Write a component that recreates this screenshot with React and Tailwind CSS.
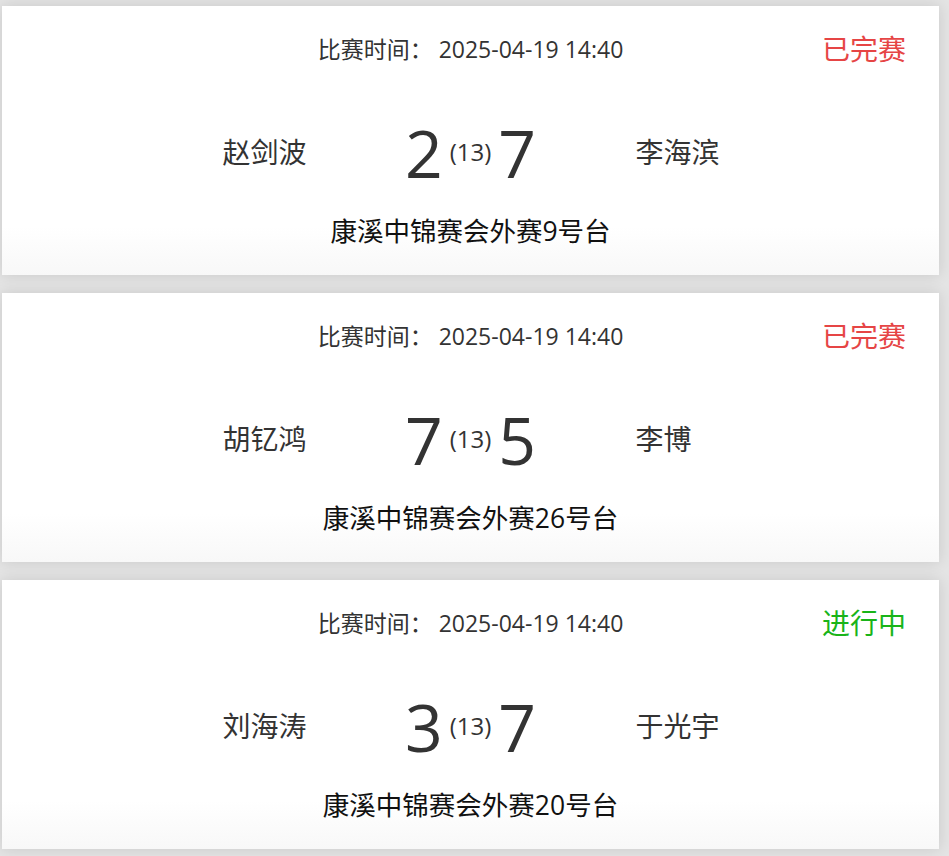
import React from "react";

const matches = [
  { left: "赵剑波", right: "李海滨", a: 2, b: 7, frames: 13, venue: "康溪中锦赛会外赛9号台", status: "已完赛", done: true },
  { left: "胡钇鸿", right: "李博", a: 7, b: 5, frames: 13, venue: "康溪中锦赛会外赛26号台", status: "已完赛", done: true },
  { left: "刘海涛", right: "于光宇", a: 3, b: 7, frames: 13, venue: "康溪中锦赛会外赛20号台", status: "进行中", done: false },
];

function MatchCard({ m }) {
  return (
    <div className="h-[269px] bg-[linear-gradient(to_bottom,#ffffff_82%,#f8f8f8)] shadow-[0_0_14px_rgba(0,0,0,0.12)] flex flex-col">
      {/* time + status */}
      <div className="grid grid-cols-[1fr_auto_1fr] items-center h-[36px] mt-[25px]">
        <div />
        <div className="text-[23px] text-[#333] leading-none">
          比赛时间：<span className="ml-[6px]">2025-04-19 14:40</span>
        </div>
        <div className={`justify-self-end pr-[33px] text-[28px] leading-none ${m.done ? "text-[#e64545]" : "text-[#19b419]"}`}>
          {m.status}
        </div>
      </div>

      {/* score row */}
      <div className="flex justify-center items-center h-[80px] mt-[45px]">
        <div className="w-[200px] pr-[58px] text-right text-[28px] text-[#333]">{m.left}</div>
        <div className="w-[212px] flex justify-center items-center gap-[7px] text-[#333]">
          <span className="text-[66px] leading-none">{m.a}</span>
          <span className="text-[24px] leading-none">({m.frames})</span>
          <span className="text-[66px] leading-none">{m.b}</span>
        </div>
        <div className="w-[200px] pl-[59px] text-left text-[28px] text-[#333]">{m.right}</div>
      </div>

      {/* venue */}
      <div className="mt-[22px] h-[36px] flex items-center justify-center text-[26.5px] text-[#111]">
        {m.venue}
      </div>
    </div>
  );
}

export default function App() {
  return (
    <div
      className="min-h-screen bg-[#e4e4e4] pl-[2px] pr-[10px] pt-[6px] pb-[6px] flex flex-col gap-[18px]"
      style={{ fontFamily: '"Open Sans", "Noto Sans CJK SC", sans-serif' }}
    >
      {matches.map((m, i) => (
        <MatchCard key={i} m={m} />
      ))}
    </div>
  );
}
